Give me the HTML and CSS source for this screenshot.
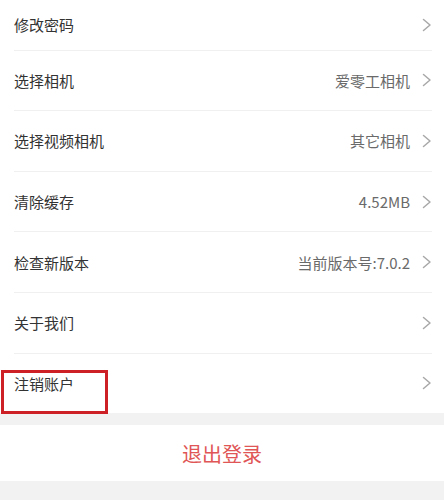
FILE: index.html
```html
<!DOCTYPE html>
<html lang="zh-CN">
<head>
<meta charset="utf-8">
<link rel="stylesheet" href="styles.css">
</head>
<body>
<div class="list">
  <div class="row first"><div class="inner"><span class="label">修改密码</span><span class="right"><svg class="chev" viewBox="0 0 10 14" width="10" height="14"><polyline points="1.5,1.5 8,7 1.5,12.5"/></svg></span></div></div>
  <div class="row"><div class="inner"><span class="label">选择相机</span><span class="right"><span class="value">爱零工相机</span><svg class="chev" viewBox="0 0 10 14" width="10" height="14"><polyline points="1.5,1.5 8,7 1.5,12.5"/></svg></span></div></div>
  <div class="row"><div class="inner"><span class="label">选择视频相机</span><span class="right"><span class="value">其它相机</span><svg class="chev" viewBox="0 0 10 14" width="10" height="14"><polyline points="1.5,1.5 8,7 1.5,12.5"/></svg></span></div></div>
  <div class="row"><div class="inner"><span class="label">清除缓存</span><span class="right"><span class="value">4.52MB</span><svg class="chev" viewBox="0 0 10 14" width="10" height="14"><polyline points="1.5,1.5 8,7 1.5,12.5"/></svg></span></div></div>
  <div class="row"><div class="inner"><span class="label">检查新版本</span><span class="right"><span class="value">当前版本号:7.0.2</span><svg class="chev" viewBox="0 0 10 14" width="10" height="14"><polyline points="1.5,1.5 8,7 1.5,12.5"/></svg></span></div></div>
  <div class="row"><div class="inner"><span class="label">关于我们</span><span class="right"><svg class="chev" viewBox="0 0 10 14" width="10" height="14"><polyline points="1.5,1.5 8,7 1.5,12.5"/></svg></span></div></div>
  <div class="row last"><div class="inner"><span class="label">注销账户</span><span class="right"><svg class="chev" viewBox="0 0 10 14" width="10" height="14"><polyline points="1.5,1.5 8,7 1.5,12.5"/></svg></span></div><div class="highlight"></div></div>
</div>
<div class="gap"></div>
<div class="logout">退出登录</div>
</body>
</html>
```
FILE: styles.css
```css
html, body {
  margin: 0;
  padding: 0;
}
body {
  background: #f2f2f2;
  font-family: "Noto Sans CJK SC", "Noto Sans", sans-serif;
  -webkit-font-smoothing: antialiased;
}
.list {
  background: #fff;
}
.row {
  position: relative;
}
.inner {
  height: 59.6px;
  margin: 0 12px 0 14px;
  border-bottom: 1px solid #f0f0f0;
  display: flex;
  align-items: center;
  justify-content: space-between;
  box-sizing: content-box;
}
.row.first .inner {
  height: 49.6px;
}
.row.last .inner {
  border-bottom: none;
}
.label {
  font-size: 15px;
  color: #333;
}
.right {
  display: flex;
  align-items: center;
  gap: 12px;
}
.value {
  font-size: 15px;
  color: #6a6a6a;
}
.chev {
  display: block;
  fill: none;
  stroke: #a8a8a8;
  stroke-width: 1.5;
  stroke-linecap: round;
  stroke-linejoin: round;
}
.highlight {
  position: absolute;
  left: 1px;
  top: 16px;
  width: 107px;
  height: 44px;
  border: 3px solid #cc1f26;
  box-sizing: border-box;
}
.gap {
  height: 12px;
}
.logout {
  height: 56px;
  background: #fff;
  display: flex;
  align-items: center;
  justify-content: center;
  font-size: 20px;
  color: #e05555;
}
```
